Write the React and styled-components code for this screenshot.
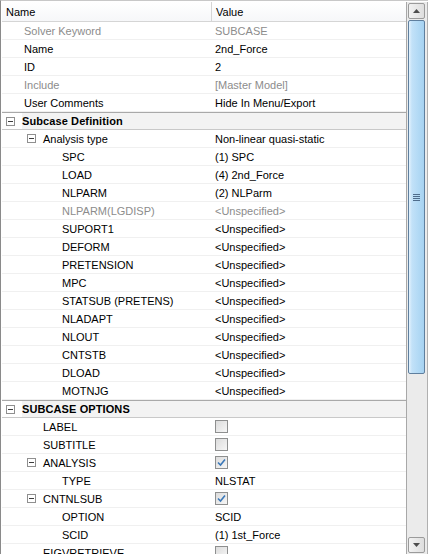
import styled, { createGlobalStyle } from "styled-components";

const GlobalStyle = createGlobalStyle`
  html, body {
    margin: 0;
    padding: 0;
    background: #ffffff;
  }
  body {
    font-family: "Liberation Sans", Arial, sans-serif;
    font-size: 11px;
  }
`;

const rows = [
  { name: "Solver Keyword", value: "SUBCASE", dim: true },
  { name: "Name", value: "2nd_Force" },
  { name: "ID", value: "2" },
  { name: "Include", value: "[Master Model]", dim: true },
  { name: "User Comments", value: "Hide In Menu/Export" },
  { name: "Subcase Definition", group: true },
  { name: "Analysis type", value: "Non-linear quasi-static", level: 1, toggle: true },
  { name: "SPC", value: "(1) SPC", level: 2 },
  { name: "LOAD", value: "(4) 2nd_Force", level: 2 },
  { name: "NLPARM", value: "(2) NLParm", level: 2 },
  { name: "NLPARM(LGDISP)", value: "<Unspecified>", level: 2, dim: true },
  { name: "SUPORT1", value: "<Unspecified>", level: 2 },
  { name: "DEFORM", value: "<Unspecified>", level: 2 },
  { name: "PRETENSION", value: "<Unspecified>", level: 2 },
  { name: "MPC", value: "<Unspecified>", level: 2 },
  { name: "STATSUB (PRETENS)", value: "<Unspecified>", level: 2 },
  { name: "NLADAPT", value: "<Unspecified>", level: 2 },
  { name: "NLOUT", value: "<Unspecified>", level: 2 },
  { name: "CNTSTB", value: "<Unspecified>", level: 2 },
  { name: "DLOAD", value: "<Unspecified>", level: 2 },
  { name: "MOTNJG", value: "<Unspecified>", level: 2 },
  { name: "SUBCASE OPTIONS", group: true },
  { name: "LABEL", check: false, level: 1 },
  { name: "SUBTITLE", check: false, level: 1 },
  { name: "ANALYSIS", check: true, level: 1, toggle: true },
  { name: "TYPE", value: "NLSTAT", level: 2 },
  { name: "CNTNLSUB", check: true, level: 1, toggle: true },
  { name: "OPTION", value: "SCID", level: 2 },
  { name: "SCID", value: "(1) 1st_Force", level: 2 },
  { name: "EIGVRETRIEVE", check: false, level: 1 },
];

const indents = { 0: 24, 1: 43, 2: 62 };

const MinusBox = () => (
  <svg width="9" height="9" viewBox="0 0 9 9">
    <rect x="0.5" y="0.5" width="8" height="8" fill="#fff" stroke="#8f8f8f" />
    <path d="M2 4.5h5" stroke="#3d3d3d" />
  </svg>
);

const Check = ({ checked }) => (
  <CheckBox>
    {checked && (
      <svg width="11" height="11" viewBox="0 0 11 11">
        <path d="M2 5.5 L4.5 8 L9 2.5" fill="none" stroke="#3b78b8" strokeWidth="1.6" />
      </svg>
    )}
  </CheckBox>
);

const App = () => {
  return (
    <>
      <GlobalStyle />
      <Frame>
        <Grid>
          <Header>
            <HeadCell $first>Name</HeadCell>
            <HeadCell>Value</HeadCell>
          </Header>
          <Body>
            {rows.map((r) =>
              r.group ? (
                <GroupRow key={r.name}>
                  <Toggle $left={6}>
                    <MinusBox />
                  </Toggle>
                  <GroupLabel>{r.name}</GroupLabel>
                </GroupRow>
              ) : (
                <Row key={r.name}>
                  <NameCell $indent={indents[r.level || 0]} $dim={r.dim}>
                    {r.toggle && (
                      <Toggle $left={27}>
                        <MinusBox />
                      </Toggle>
                    )}
                    {r.name}
                  </NameCell>
                  <ValueCell $dim={r.dim}>
                    {r.check !== undefined ? <Check checked={r.check} /> : r.value}
                  </ValueCell>
                </Row>
              )
            )}
          </Body>
        </Grid>
        <ScrollBar>
          <ArrowButton>
            <svg width="7" height="4" viewBox="0 0 7 4">
              <path d="M0 4 L3.5 0 L7 4 Z" fill="#4d4d4d" />
            </svg>
          </ArrowButton>
          <Thumb>
            <Grip>
              <span />
              <span />
              <span />
              <span />
            </Grip>
          </Thumb>
          <Track />
          <ArrowButton>
            <svg width="7" height="4" viewBox="0 0 7 4">
              <path d="M0 0 L3.5 4 L7 0 Z" fill="#4d4d4d" />
            </svg>
          </ArrowButton>
        </ScrollBar>
      </Frame>
    </>
  );
};

const Frame = styled.div`
  width: 428px;
  height: 554px;
  box-sizing: border-box;
  border-left: 1px solid #8a8a8a;
  border-top: 1px solid #c8c8c8;
  padding-left: 1px;
  padding-top: 1px;
  display: flex;
  overflow: hidden;
  background: #fff;
`;

const Grid = styled.div`
  width: 404px;
  display: flex;
  flex-direction: column;
  border-right: 1px solid #a8a8a8;
  overflow: hidden;
`;

const Header = styled.div`
  height: 19px;
  flex: none;
  display: grid;
  grid-template-columns: 210px 1fr;
  background: linear-gradient(#ffffff, #f6f7f9);
  border-bottom: 1px solid #d5d5d5;
`;

const HeadCell = styled.div`
  display: flex;
  align-items: center;
  padding-left: 4px;
  color: #000;
  border-right: ${({ $first }) => ($first ? "1px solid #d5d5d5" : "none")};
`;

const Body = styled.div`
  display: flex;
  flex-direction: column;
`;

const Row = styled.div`
  height: 18px;
  flex: none;
  box-sizing: border-box;
  display: grid;
  grid-template-columns: 210px 1fr;
  border-bottom: 1px solid #f0f0f0;
`;

const NameCell = styled.div`
  position: relative;
  display: flex;
  align-items: center;
  padding-left: ${({ $indent }) => $indent - 2}px;
  color: ${({ $dim }) => ($dim ? "#8c8c8c" : "#000")};
  white-space: nowrap;
`;

const ValueCell = styled.div`
  display: flex;
  align-items: center;
  padding-left: 3px;
  color: ${({ $dim }) => ($dim ? "#8c8c8c" : "#000")};
  white-space: nowrap;
`;

const Toggle = styled.span`
  position: absolute;
  left: ${({ $left }) => $left - 2}px;
  top: 4px;
  width: 9px;
  height: 9px;
  display: flex;
`;

const GroupRow = styled.div`
  position: relative;
  height: 18px;
  flex: none;
  box-sizing: border-box;
  display: flex;
  align-items: center;
  background: linear-gradient(90deg, #fff 20px, #f3f3f3 20px);
  border-top: 1px solid #a9a9a9;
  border-bottom: 1px solid #c9c9c9;
`;

const GroupLabel = styled.span`
  padding-left: 20px;
  font-weight: bold;
  color: #000;
  letter-spacing: 0.1px;
`;

const CheckBox = styled.span`
  width: 13px;
  height: 13px;
  box-sizing: border-box;
  border: 1px solid #8e8f8f;
  background: linear-gradient(135deg, #dcdcdc, #f6f6f6);
  display: flex;
  align-items: center;
  justify-content: center;
`;

const ScrollBar = styled.div`
  width: 21px;
  flex: none;
  display: flex;
  flex-direction: column;
  background: #ebebeb;
  border-right: 1px solid #b0b0b0;
  box-sizing: border-box;
  padding: 1px 2px 1px 1px;
  gap: 1px;
`;

const ArrowButton = styled.div`
  height: 16px;
  flex: none;
  box-sizing: border-box;
  border: 1px solid #9b9b9b;
  border-radius: 2px;
  background: linear-gradient(90deg, #f2f2f2, #dedede);
  display: flex;
  align-items: center;
  justify-content: center;
`;

const Thumb = styled.div`
  height: 354px;
  flex: none;
  box-sizing: border-box;
  border: 1px solid #5f7f9e;
  border-radius: 2px;
  background: linear-gradient(90deg, #e3f2fd 0, #c2e1f8 3px, #b3daf5 60%, #a6d2f1);
  display: flex;
  align-items: center;
  justify-content: center;
`;

const Grip = styled.div`
  display: flex;
  flex-direction: column;
  gap: 1px;
  span {
    display: block;
    width: 7px;
    height: 1px;
    background: #4f6d8c;
  }
`;

const Track = styled.div`
  flex: 1;
`;

export default App;
